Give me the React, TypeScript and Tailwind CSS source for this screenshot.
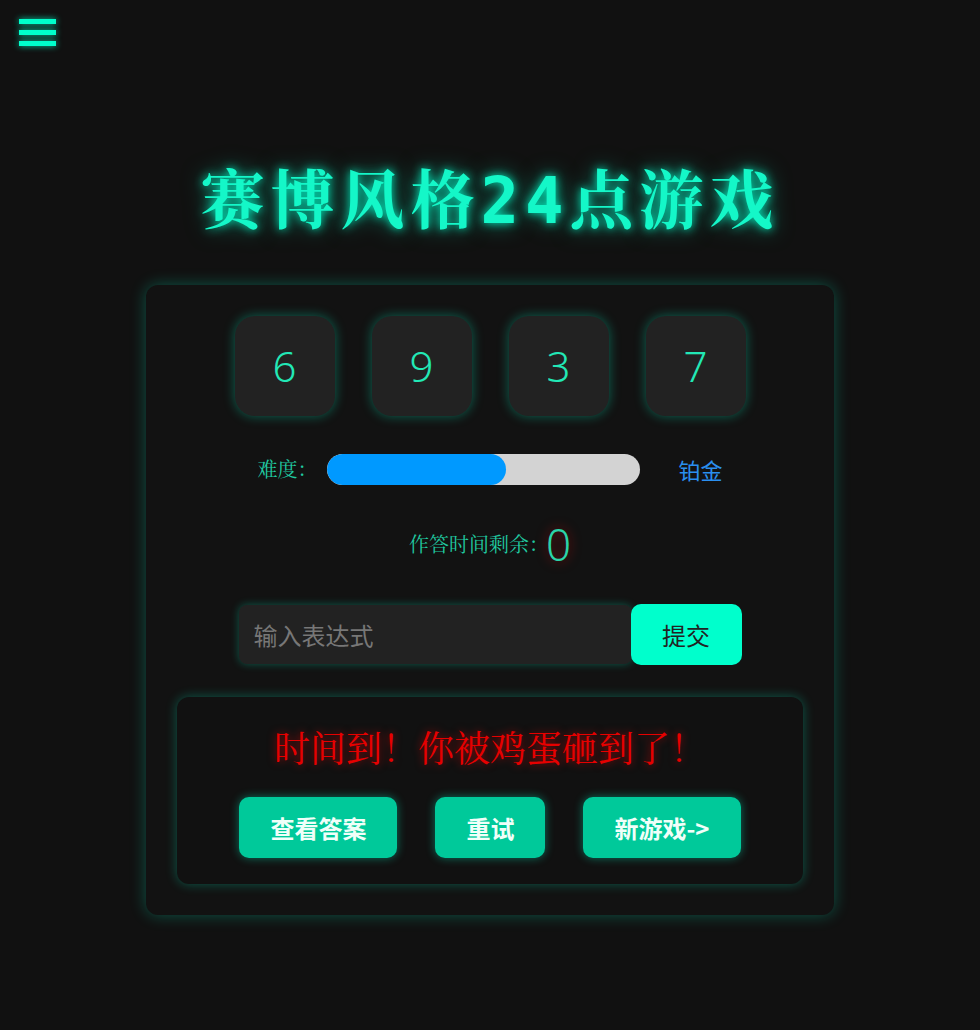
import React from "react";

const CJK = "'Noto Serif CJK SC', 'Noto Sans CJK SC', serif";
const SANS = "'Noto Sans CJK SC', sans-serif";

export default function App() {
  const cards = [6, 9, 3, 7];
  return (
    <div className="min-h-[1030px] bg-[#111111]" style={{ fontFamily: CJK }}>
      <div className="pt-[19px] pl-[19px] flex flex-col gap-[6px] w-fit">
        <div className="w-[37px] h-[5px] bg-[#00ffcc] shadow-[0_0_6px_rgba(0,255,204,0.8)]" />
        <div className="w-[37px] h-[5px] bg-[#00ffcc] shadow-[0_0_6px_rgba(0,255,204,0.8)]" />
        <div className="w-[37px] h-[5px] bg-[#00ffcc] shadow-[0_0_6px_rgba(0,255,204,0.8)]" />
      </div>

      <h1
        className="mt-[123px] text-center text-[64px] leading-[64px] font-bold tracking-[6px] text-[#14f7c8] [text-shadow:0_0_10px_rgba(0,255,204,0.9),0_0_22px_rgba(0,255,204,0.5)]"
        style={{ fontFamily: "'DejaVu Sans Mono', 'Noto Serif CJK SC', 'Noto Sans CJK SC', monospace" }}
      >
        赛博风格24点游戏
      </h1>

      <div className="mt-[52px] mx-auto w-[688px] rounded-[12px] bg-[#121212] p-[31px] shadow-[0_0_16px_rgba(0,255,204,0.28)]">
        <div className="flex justify-center gap-[37px]">
          {cards.map((n, i) => (
            <div
              key={i}
              className="w-[100px] h-[100px] rounded-[20px] bg-[#222222] flex items-center justify-center shadow-[0_0_12px_rgba(0,255,204,0.35)]"
            >
              <span
                className="text-[42px] leading-none text-[#22e8b6]"
                style={{ fontFamily: "'Noto Sans', sans-serif", fontWeight: 300 }}
              >
                {n}
              </span>
            </div>
          ))}
        </div>

        <div className="mt-[38px] h-[31px] flex items-center justify-center">
          <span className="w-[60px] text-[20px] leading-[31px] text-[#20c9a0] mr-[10px] -translate-y-[1px]">难度：</span>
          <div className="w-[313px] h-[31px] rounded-full bg-[#d3d3d3] overflow-hidden">
            <div className="h-full w-[57%] rounded-full bg-[#0099ff]" />
          </div>
          <span className="ml-[38px] text-[22px] leading-[31px] text-[#2a8ff0]" style={{ fontFamily: SANS }}>
            铂金
          </span>
        </div>

        <div className="mt-[37px] h-[44px] flex items-center justify-center">
          <span className="text-[20px] text-[#20c9a0]">作答时间剩余：</span>
          <span
            className="-ml-[3px] text-[44px] leading-none text-[#2ad4a8] [text-shadow:0_0_12px_rgba(255,0,0,0.55)]"
            style={{ fontFamily: "'Noto Sans', sans-serif", fontWeight: 300 }}
          >
            0
          </span>
        </div>

        <div className="mt-[38px] flex items-center justify-center">
          <input
            placeholder="输入表达式"
            className="w-[393px] h-[59px] rounded-[8px] bg-[#222222] pl-[15px] text-[24px] text-[#dddddd] placeholder:text-[#777777] outline-none shadow-[0_0_8px_rgba(0,255,204,0.3)]"
            style={{ fontFamily: SANS }}
          />
          <button
            className="-ml-[1px] w-[111px] h-[61px] rounded-[10px] bg-[#00ffcc] text-[24px] text-[#222222]"
            style={{ fontFamily: SANS }}
          >
            提交
          </button>
        </div>

        <div className="mt-[32px] rounded-[12px] bg-[#111111] pt-[25px] pb-[26px] shadow-[0_0_12px_rgba(0,255,204,0.3)]">
          <div className="h-[50px] leading-[50px] text-center text-[36px] text-[#e60000] [text-shadow:0_0_8px_rgba(255,0,0,0.6)]">
            时间到！你被鸡蛋砸到了！
          </div>
          <div className="mt-[25px] flex justify-center gap-[38px]" style={{ fontFamily: SANS }}>
            {["查看答案", "重试", "新游戏->"].map((t) => (
              <button
                key={t}
                className="h-[61px] px-[31px] rounded-[10px] bg-[#00c99a] text-[24px] font-bold text-[#f0fff9] shadow-[0_0_10px_rgba(0,255,204,0.4)]"
              >
                {t}
              </button>
            ))}
          </div>
        </div>
      </div>
    </div>
  );
}
